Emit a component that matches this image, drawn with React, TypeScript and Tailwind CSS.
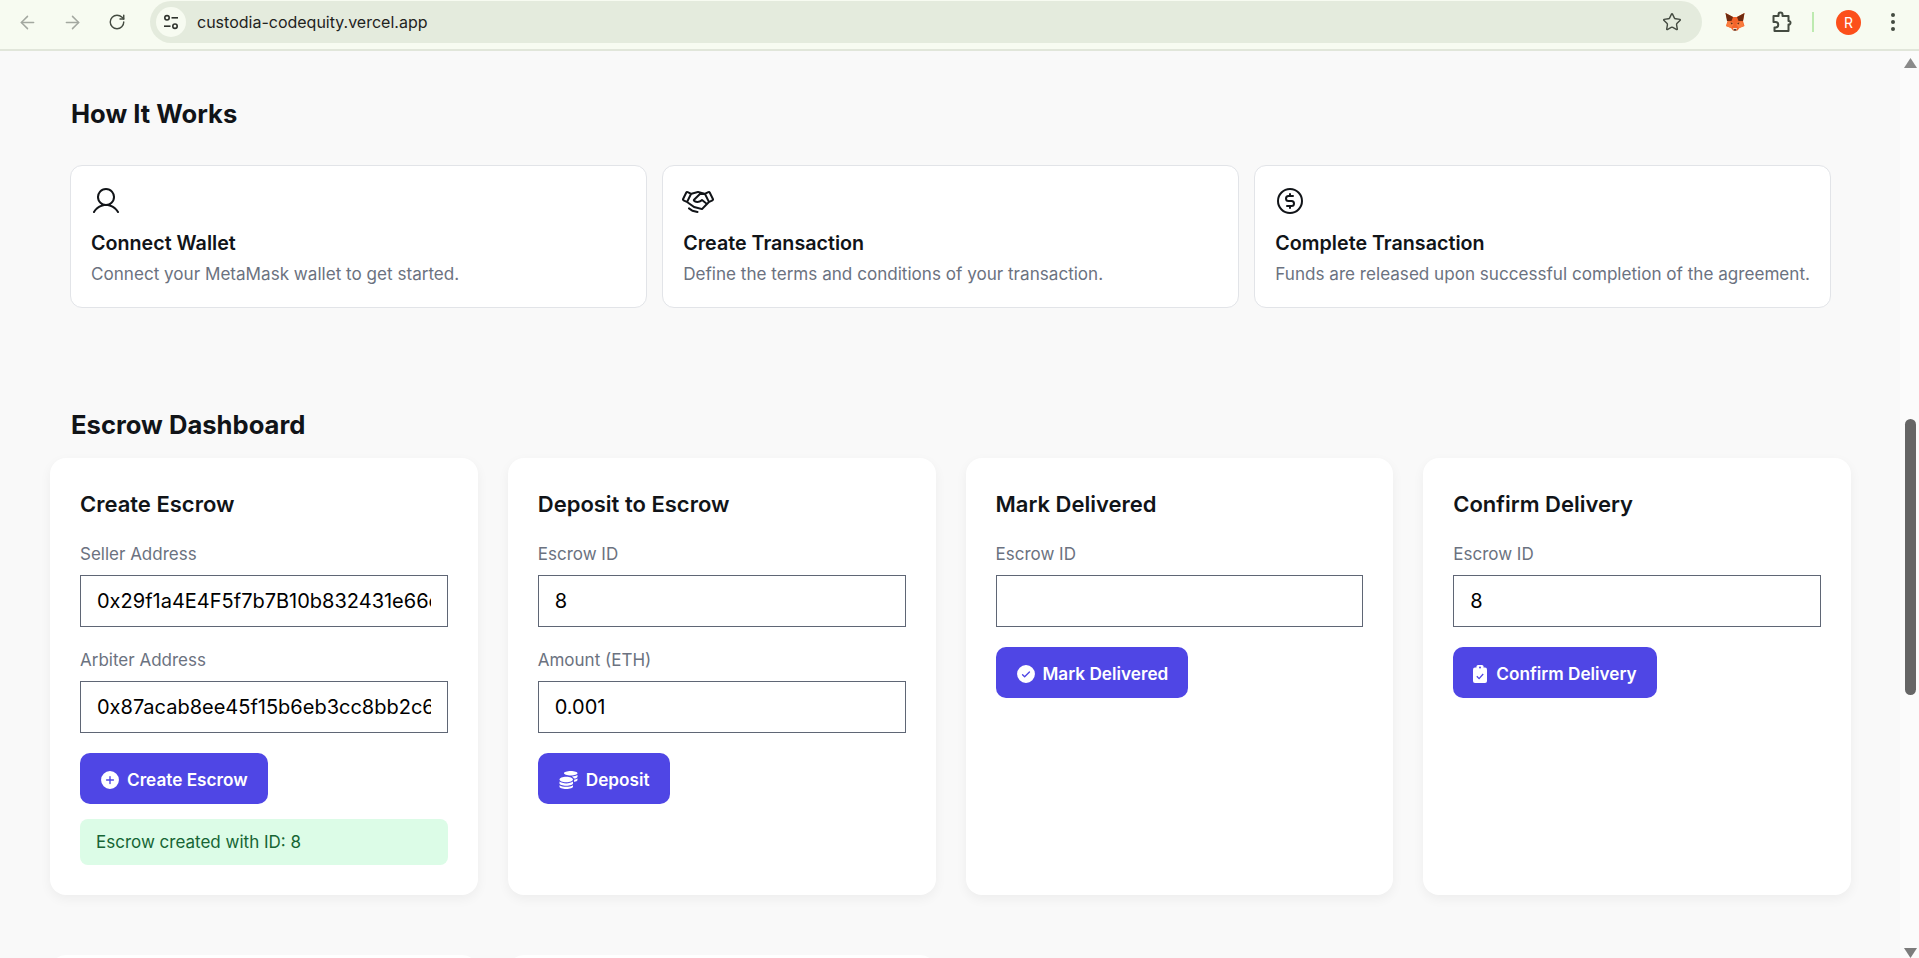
import React from "react";
import { ArrowLeft, ArrowRight, RotateCw, Star } from "lucide-react";
import {
  PiUser,
  PiHandshake,
  PiCurrencyCircleDollar,
  PiPlusCircleFill,
  PiCheckCircleFill,
} from "react-icons/pi";
import { FaCoins } from "react-icons/fa";

const steps = [
  {
    icon: <PiUser />,
    title: "Connect Wallet",
    text: "Connect your MetaMask wallet to get started.",
  },
  {
    icon: <PiHandshake />,
    title: "Create Transaction",
    text: "Define the terms and conditions of your transaction.",
  },
  {
    icon: <PiCurrencyCircleDollar />,
    title: "Complete Transaction",
    text: "Funds are released upon successful completion of the agreement.",
  },
];

export default function App() {
  return (
    <div className="flex h-[958px] flex-col overflow-hidden bg-[#f9f9f9] font-['Inter','Liberation_Sans',sans-serif]">
      <BrowserBar />
      <div className="flex min-h-0 flex-1">
        <main className="min-w-0 flex-1 overflow-hidden">
          <section className="pt-[45px] pr-[69px] pl-[70px]">
            <h2 className="pl-px text-[25.6px] leading-[36px] font-bold text-[#111418]">
              How It Works
            </h2>
            <div className="mt-[33px] grid grid-cols-3 gap-[15.5px]">
              {steps.map((step) => (
                <StepCard key={step.title} {...step} />
              ))}
            </div>
          </section>

          <section className="pt-[99px] pr-[49px] pl-[50px]">
            <h2 className="pl-[21px] text-[25.6px] leading-[36px] font-bold text-[#111418]">
              Escrow Dashboard
            </h2>
            <div className="mt-[15px] grid grid-cols-4 gap-x-[30px] gap-y-[60px]">
              <EscrowCard title="Create Escrow">
                <Field label="Seller Address" value="0x29f1a4E4F5f7b7B10b832431e66c6a8d9C1fF0a2" />
                <Field label="Arbiter Address" value="0x87acab8ee45f15b6eb3cc8bb2c6a1f5e9d10c4b7" />
                <ActionButton icon={<PiPlusCircleFill />} label="Create Escrow" />
                <p className="mt-[15px] rounded-lg bg-[#dcfce7] px-4 py-[11px] text-[17px] leading-6 text-[#166534]">
                  Escrow created with ID: 8
                </p>
              </EscrowCard>
              <EscrowCard title="Deposit to Escrow">
                <Field label="Escrow ID" value="8" />
                <Field label="Amount (ETH)" value="0.001" />
                <ActionButton icon={<FaCoins className="w-[23px] text-[18px]" />} label="Deposit" />
              </EscrowCard>
              <EscrowCard title="Mark Delivered">
                <Field label="Escrow ID" value="" />
                <ActionButton icon={<PiCheckCircleFill />} label="Mark Delivered" />
              </EscrowCard>
              <EscrowCard title="Confirm Delivery">
                <Field label="Escrow ID" value="8" />
                <ActionButton icon={<ClipboardCheckIcon />} label="Confirm Delivery" />
              </EscrowCard>
              <div className="h-[300px] rounded-2xl bg-white" />
              <div className="h-[300px] rounded-2xl bg-white" />
            </div>
          </section>
        </main>
        <Scrollbar />
      </div>
    </div>
  );
}

function StepCard({
  icon,
  title,
  text,
}: {
  icon: React.ReactNode;
  title: string;
  text: string;
}) {
  return (
    <div className="h-[143px] rounded-xl border border-[#e2e4e8] bg-white px-5 pt-[19px]">
      <div className="-ml-px h-[32px] text-[32px] leading-none text-[#111418]">{icon}</div>
      <h3 className="mt-[12px] text-[19.7px] leading-7 font-semibold text-[#111418]">
        {title}
      </h3>
      <p className="mt-[5px] text-[17.1px] leading-6 text-[#6b7280]">{text}</p>
    </div>
  );
}

function EscrowCard({
  title,
  children,
}: {
  title: string;
  children: React.ReactNode;
}) {
  return (
    <div className="h-[437px] rounded-2xl bg-white p-[30px] shadow-[0_4px_12px_rgba(0,0,0,0.05)]">
      <h3 className="mb-[22px] text-[22px] leading-[32px] font-semibold text-[#111418]">
        {title}
      </h3>
      {children}
    </div>
  );
}

function Field({ label, value }: { label: string; value: string }) {
  return (
    <label className="mb-[21px] block">
      <span className="block text-[17px] leading-6 text-[#6b7280]">{label}</span>
      <input
        readOnly
        value={value}
        className="mt-[9px] block h-[52px] w-full border border-[#5f6675] bg-white px-4 text-[20px] text-black outline-none"
      />
    </label>
  );
}

function ActionButton({ icon, label }: { icon: React.ReactNode; label: string }) {
  return (
    <button className="-mt-px flex h-[51px] items-center gap-[6px] rounded-[10px] bg-[#4f46e5] pt-[2px] pr-[20px] pl-[19px] text-[17.2px] font-semibold text-white">
      <span className="flex items-center justify-center text-[22px] leading-none">{icon}</span>
      {label}
    </button>
  );
}

function BrowserBar() {
  return (
    <header className="flex h-[51px] shrink-0 items-start border-b-2 border-[#e1e6da] bg-[#f7fbf1] pt-px">
      <div className="flex h-[42px] w-[150px] shrink-0 items-center text-[#a3a8a0]">
        <span className="flex w-[54px] justify-center">
          <ArrowLeft size={21} strokeWidth={1.7} />
        </span>
        <span className="flex w-[36px] justify-center">
          <ArrowRight size={21} strokeWidth={1.7} />
        </span>
        <span className="flex w-[54px] justify-center text-[#444b41]">
          <RotateCw size={18} strokeWidth={1.9} />
        </span>
      </div>
      <div className="flex h-[42px] w-[1552px] shrink-0 items-center rounded-full bg-[#e4ebdd] pr-[20px] pl-[6px]">
        <span className="flex h-[30px] w-[30px] items-center justify-center rounded-full bg-[#f7fbf1]">
          <TuneIcon />
        </span>
        <span className="ml-[11px] flex-1 text-[16px] text-[#1f231d]">
          custodia-codequity.vercel.app
        </span>
        <Star size={20} strokeWidth={1.7} className="text-[#444b41]" />
      </div>
      <div className="flex h-[42px] flex-1 items-center">
        <span className="ml-[23px]">
          <FoxIcon />
        </span>
        <span className="ml-[27px]">
          <PuzzleIcon />
        </span>
        <span className="ml-[20px] h-[20px] w-[2px] bg-[#bdeab0]" />
        <span className="ml-[22px] flex h-[25px] w-[25px] items-center justify-center rounded-full bg-[#fc4f1a] text-[14px] text-white">
          R
        </span>
        <span className="ml-[30px] flex flex-col gap-[3px]">
          <i className="h-[4px] w-[4px] rounded-full bg-[#444b41]" />
          <i className="h-[4px] w-[4px] rounded-full bg-[#444b41]" />
          <i className="h-[4px] w-[4px] rounded-full bg-[#444b41]" />
        </span>
      </div>
    </header>
  );
}

function Scrollbar() {
  return (
    <div className="flex w-[19px] shrink-0 flex-col items-center bg-[#fbfbfb] pl-[2px]">
      <svg width="13" height="10" viewBox="0 0 13 10" className="mt-[7px] shrink-0">
        <path d="M6.5 0 13 10H0z" fill="#8a8a8a" />
      </svg>
      <div className="mt-[351px] h-[276px] w-[11px] shrink-0 rounded-full bg-[#666666]" />
      <svg width="13" height="10" viewBox="0 0 13 10" className="mt-auto shrink-0">
        <path d="M0 0H13L6.5 10z" fill="#7c7c7c" />
      </svg>
    </div>
  );
}

function ClipboardCheckIcon() {
  return (
    <svg width="18" height="18" viewBox="0 0 18 18">
      <rect x="1" y="2.5" width="14" height="15.5" rx="2" fill="#fff" />
      <rect x="4.5" y="0" width="7" height="5" rx="1.5" fill="#fff" />
      <circle cx="8" cy="2.4" r="1" fill="#4f46e5" />
      <path d="M4.8 11.2 7.1 13.6 11.2 9" fill="none" stroke="#4f46e5" strokeWidth="1.3" />
    </svg>
  );
}

function TuneIcon() {
  return (
    <svg width="16" height="16" viewBox="0 0 16 16" fill="none" stroke="#2e322c" strokeWidth="1.6">
      <circle cx="4" cy="3.8" r="2.2" />
      <path d="M8.5 3.8H15" />
      <circle cx="12" cy="12.2" r="2.2" />
      <path d="M1 12.2H7.5" />
    </svg>
  );
}

function PuzzleIcon() {
  return (
    <svg width="20" height="22" viewBox="0 0 20 22" fill="none" stroke="#444b41" strokeWidth="2" strokeLinejoin="round">
      <path d="M1.5 5H6.5V3.5a2 2 0 0 1 4 0V5h6v5h1a2 2 0 0 1 0 3.5h-1V20H2.5v-3.5h1a2.7 2.7 0 0 0 0-5.5h-2z" />
    </svg>
  );
}

function FoxIcon() {
  return (
    <svg width="20" height="20" viewBox="0 0 20 20">
      <path d="M0.5 1 8 5h4l7.5-4-1.5 8 1.5 5-5 2-2 2.5H8L6 16l-5-2 1.5-5z" fill="#f4632a" />
      <path d="M0.5 1 8 5 6.5 9 2 9zM19.5 1 12 5l1.5 4 4.5 0z" fill="#6e2a10" />
      <path d="M3 9.5 8 10 8.5 13 6 16 1 14zM17 9.5 12 10 11.5 13 14 16 19 14z" fill="#f97b3d" />
      <path d="M5.5 10.5 8 11 6.5 12.5zM14.5 10.5 12 11 13.5 12.5z" fill="#5a2a14" />
      <path d="M8 16h4l-.5 2h-3z" fill="#f3d9c6" />
      <path d="M8.7 17.2h2.6v1.3H8.7z" fill="#2a1a12" />
    </svg>
  );
}
